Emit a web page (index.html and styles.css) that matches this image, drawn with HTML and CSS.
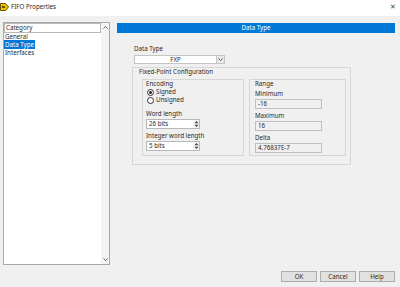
FILE: index.html
```html
<!DOCTYPE html>
<html lang="en">
<head>
    <meta charset="UTF-8">
    <title>FIFO Properties</title>
    <link rel="stylesheet" href="styles.css">
</head>
<body>

<div class="window">
    <div class="titlebar">
        <svg class="app-icon" width="9" height="8" viewBox="0 0 9 8">
            <polygon points="0.5,0.5 5.5,0.5 8.5,4 5.5,7.5 0.5,7.5" fill="#f2c200" stroke="#6b5500" stroke-width="1"/>
            <rect x="2" y="3" width="3" height="2" fill="#6b5500"/>
        </svg>
        <span class="title">FIFO Properties</span>
        <span class="close">&#x2715;</span>
    </div>

    <div class="main">
        <div class="category">
            <div class="list">
                <div class="list-header">Category</div>
                <div class="item">General</div>
                <div class="item"><span class="selected">Data Type</span></div>
                <div class="item">Interfaces</div>
            </div>
            <div class="scrollbar">
                <svg width="7" height="5" viewBox="0 0 7 5"><path d="M1.5 3.5 L3.5 1.5 L5.5 3.5" fill="none" stroke="#606060" stroke-width="1"/></svg>
                <svg width="7" height="5" viewBox="0 0 7 5"><path d="M1.5 1.5 L3.5 3.5 L5.5 1.5" fill="none" stroke="#606060" stroke-width="1"/></svg>
            </div>
        </div>

        <div class="panel">
            <div class="banner">Data Type</div>
            <div class="form">
                <div class="data-type">
                    <div class="label">Data Type</div>
                    <div class="dropdown">
                        <span class="dropdown-value">FXP</span>
                        <span class="dropdown-btn">
                            <svg width="7" height="7" viewBox="0 0 7 7"><path d="M1.5 2.5 L3.5 4.5 L5.5 2.5" fill="none" stroke="#555" stroke-width="1"/></svg>
                        </span>
                    </div>
                </div>

                <div class="group">
                    <div class="group-title">Fixed-Point Configuration</div>
                    <div class="group-row">
                        <div class="subgroup encoding">
                            <div class="group-title">Encoding</div>
                            <div class="radio checked"><span class="dot"></span>Signed</div>
                            <div class="radio"><span class="dot"></span>Unsigned</div>
                            <div class="label field-label">Word length</div>
                            <div class="spin">
                                <span class="spin-value">26 bits</span>
                                <span class="spin-btn">
                                    <svg width="5" height="8" viewBox="0 0 5 8"><path d="M2.5 1 L4.5 3.2 L0.5 3.2 Z M2.5 7 L4.5 4.8 L0.5 4.8 Z" fill="#444"/></svg>
                                </span>
                            </div>
                            <div class="label field-label">Integer word length</div>
                            <div class="spin">
                                <span class="spin-value">5 bits</span>
                                <span class="spin-btn">
                                    <svg width="5" height="8" viewBox="0 0 5 8"><path d="M2.5 1 L4.5 3.2 L0.5 3.2 Z M2.5 7 L4.5 4.8 L0.5 4.8 Z" fill="#444"/></svg>
                                </span>
                            </div>
                        </div>
                        <div class="subgroup range">
                            <div class="group-title">Range</div>
                            <div class="label field-label">Minimum</div>
                            <div class="readonly">-16</div>
                            <div class="label field-label">Maximum</div>
                            <div class="readonly">16</div>
                            <div class="label field-label">Delta</div>
                            <div class="readonly">4.76837E-7</div>
                        </div>
                    </div>
                </div>
            </div>
        </div>
    </div>

    <div class="footer">
        <div class="button">OK</div>
        <div class="button">Cancel</div>
        <div class="button">Help</div>
    </div>
</div>

</body>
</html>
```

FILE: styles.css
```css
body {
    margin: 0;
    font-family: "Noto Sans", "Liberation Sans", sans-serif;
    font-size: 6.2px;
    line-height: 8px;
    color: #2a2a2a;
    background-color: #f0f0f0;
}
.window {
    width: 400px;
    height: 287px;
    overflow: hidden;
}
.titlebar {
    height: 16px;
    background: #fff;
    display: flex;
    align-items: center;
}
.app-icon {
    margin-top: -2px;
}
.title {
    margin-left: 2px;
    margin-top: -2px;
}
.close {
    margin-left: auto;
    margin-right: 4px;
    margin-top: -2px;
    font-size: 7px;
    color: #444;
}
.main {
    display: flex;
    gap: 7px;
    padding: 6px 5px 0 3px;
    height: 249px;
    box-sizing: border-box;
}
.category {
    width: 107px;
    height: 243px;
    box-sizing: border-box;
    background: #fff;
    border: 1px solid #a9a9a9;
    display: flex;
}
.list {
    flex: 1;
}
.list-header {
    height: 8px;
    border: 1px solid #b9b9b9;
    padding-left: 1px;
    line-height: 7px;
}
.item {
    height: 8px;
    padding-left: 1px;
}
.selected {
    background: #0078d7;
    color: #fff;
    padding: 0 1px;
    margin-left: -1px;
}
.scrollbar {
    width: 8px;
    background: #f4f4f4;
    display: flex;
    flex-direction: column;
    justify-content: space-between;
    align-items: center;
    padding: 2px 0;
}
.panel {
    width: 278px;
    padding-top: 1px;
}
.banner {
    height: 10px;
    line-height: 10px;
    background: #0078d7;
    color: #fff;
    text-align: center;
}
.form {
    padding-left: 15px;
    padding-top: 12px;
}
.data-type {
    padding-left: 2px;
}
.label {
    height: 8px;
}
.dropdown {
    margin-top: 2px;
    width: 91px;
    height: 9px;
    box-sizing: border-box;
    background: #fff;
    border: 1px solid #c4c4c4;
    display: flex;
}
.dropdown-value {
    flex: 1;
    text-align: center;
    line-height: 7px;
}
.dropdown-btn {
    width: 7px;
    border-left: 1px solid #c4c4c4;
    background: #e8e8e8;
    display: flex;
    align-items: center;
    justify-content: center;
}
.group {
    margin-top: 3px;
    width: 219px;
    height: 98px;
    box-sizing: border-box;
    border: 1px solid #d6d6d6;
    padding: 0 0 0 9px;
}
.group > .group-title {
    margin-left: -3px;
}
.group-title {
    height: 8px;
}
.group-row {
    display: flex;
    gap: 5px;
    margin-top: 3px;
}
.subgroup {
    height: 77px;
    box-sizing: border-box;
    border: 1px solid #d6d6d6;
    padding: 0 3px;
}
.encoding {
    width: 102px;
}
.range {
    width: 97px;
    padding-left: 5px;
}
.radio {
    height: 8px;
    display: flex;
    align-items: center;
    padding-left: 1px;
}
.radio:first-of-type {
    margin-top: 2px;
}
.dot {
    width: 5px;
    height: 5px;
    border: 1px solid #333;
    border-radius: 50%;
    background: #fff;
    margin-right: 2px;
    position: relative;
}
.radio.checked .dot::after {
    content: "";
    position: absolute;
    left: 1px;
    top: 1px;
    width: 3px;
    height: 3px;
    border-radius: 50%;
    background: #222;
}
.encoding .radio + .radio {
    margin-bottom: 6px;
}
.field-label {
    margin-top: 3px;
    margin-bottom: 1px;
}
.range .group-title + .field-label {
    margin-top: 2px;
}
.spin {
    width: 54px;
    height: 10px;
    box-sizing: border-box;
    background: #fff;
    border: 1px solid #b8b8b8;
    display: flex;
}
.spin-value {
    flex: 1;
    padding-left: 2px;
    line-height: 8px;
}
.spin-btn {
    width: 6px;
    display: flex;
    align-items: center;
    justify-content: center;
    background: #f2f2f2;
}
.readonly {
    width: 67px;
    height: 10px;
    box-sizing: border-box;
    background: #f0f0f0;
    border: 1px solid #bfbfbf;
    padding-left: 2px;
    line-height: 8px;
}
.footer {
    display: flex;
    justify-content: flex-end;
    gap: 3px;
    padding-right: 5px;
    margin-top: 6px;
}
.button {
    width: 36px;
    height: 11px;
    box-sizing: border-box;
    background: #e1e1e1;
    border: 1px solid #adadad;
    text-align: center;
    line-height: 9px;
}
```
